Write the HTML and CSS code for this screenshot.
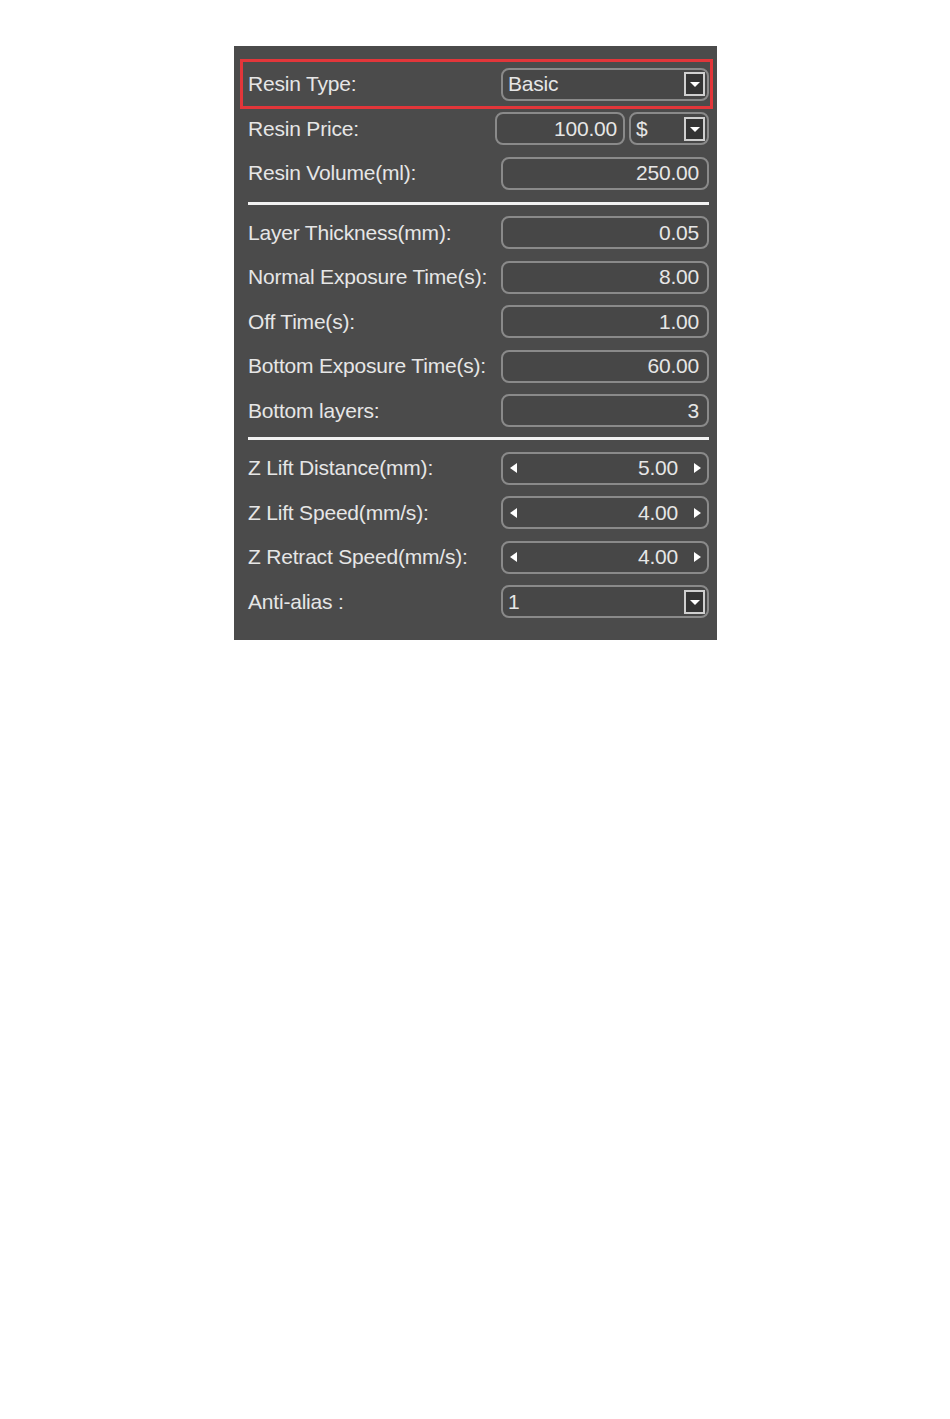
FILE: index.html
```html
<!DOCTYPE html>
<html lang="en">
<head>
    <meta charset="UTF-8">
    <meta name="viewport" content="width=device-width, initial-scale=1.0">
    <title>Print Settings</title>
    <link rel="stylesheet" href="styles.css">
</head>

<body>

    <div class="panel">
        <div class="row highlight">
            <span class="label">Resin Type:</span>
            <div class="field select">
                <span class="text">Basic</span>
                <span class="drop"></span>
            </div>
        </div>
        <div class="row">
            <span class="label">Resin Price:</span>
            <div class="pair">
                <div class="field price"><span class="text num">100.00</span></div>
                <div class="field select currency">
                    <span class="text">$</span>
                    <span class="drop"></span>
                </div>
            </div>
        </div>
        <div class="row">
            <span class="label">Resin Volume(ml):</span>
            <div class="field"><span class="text num">250.00</span></div>
        </div>

        <div class="sep"></div>

        <div class="row">
            <span class="label">Layer Thickness(mm):</span>
            <div class="field"><span class="text num">0.05</span></div>
        </div>
        <div class="row">
            <span class="label">Normal Exposure Time(s):</span>
            <div class="field"><span class="text num">8.00</span></div>
        </div>
        <div class="row">
            <span class="label">Off Time(s):</span>
            <div class="field"><span class="text num">1.00</span></div>
        </div>
        <div class="row">
            <span class="label">Bottom Exposure Time(s):</span>
            <div class="field"><span class="text num">60.00</span></div>
        </div>
        <div class="row">
            <span class="label">Bottom layers:</span>
            <div class="field"><span class="text num">3</span></div>
        </div>

        <div class="sep sep2"></div>

        <div class="row">
            <span class="label">Z Lift Distance(mm):</span>
            <div class="field spin">
                <span class="arrow left"></span>
                <span class="text num">5.00</span>
                <span class="arrow right"></span>
            </div>
        </div>
        <div class="row">
            <span class="label">Z Lift Speed(mm/s):</span>
            <div class="field spin">
                <span class="arrow left"></span>
                <span class="text num">4.00</span>
                <span class="arrow right"></span>
            </div>
        </div>
        <div class="row">
            <span class="label">Z Retract Speed(mm/s):</span>
            <div class="field spin">
                <span class="arrow left"></span>
                <span class="text num">4.00</span>
                <span class="arrow right"></span>
            </div>
        </div>
        <div class="row">
            <span class="label">Anti-alias :</span>
            <div class="field select">
                <span class="text">1</span>
                <span class="drop"></span>
            </div>
        </div>
    </div>

</body>
</html>
```

FILE: styles.css
```css
/* Page */
body {
    margin: 0;
    padding: 0;
    background: #ffffff;
    font-family: "Liberation Sans", Arial, sans-serif;
}

/* Panneau des réglages */
.panel {
    width: 483px;
    height: 594px;
    margin: 46px 0 0 234px;
    padding: 16px 8px 0 14px;
    box-sizing: border-box;
    background-color: #4b4b4b;
    color: #e6e6e6;
}

.row {
    display: flex;
    align-items: center;
    justify-content: space-between;
    height: 44.5px;
    font-size: 21px;
    letter-spacing: -0.2px;
}

.highlight {
    position: relative;
}

    .highlight::after {
        content: "";
        position: absolute;
        top: -3px;
        bottom: -2px;
        left: -8px;
        right: -4px;
        border: 3px solid #e2363a;
    }

.label {
    white-space: nowrap;
}

/* Champs */
.field {
    display: flex;
    align-items: center;
    justify-content: flex-end;
    width: 208px;
    height: 33px;
    box-sizing: border-box;
    padding: 0 8px;
    border: 2px solid #8a8a8a;
    border-radius: 8px;
    background-color: #474747;
}

.text {
    white-space: nowrap;
}

.select {
    justify-content: space-between;
    padding: 0 2px 0 5px;
}

.drop {
    position: relative;
    width: 21px;
    height: 24px;
    box-sizing: border-box;
    border: 2px solid #cfcfcf;
    background-color: #343434;
}

    .drop::after {
        content: "";
        position: absolute;
        left: 3.5px;
        top: 8px;
        border-left: 5px solid transparent;
        border-right: 5px solid transparent;
        border-top: 5px solid #ffffff;
    }

.pair {
    display: flex;
    gap: 4px;
}

.price {
    width: 130px;
    padding-right: 6px;
}

.currency {
    width: 80px;
}

/* Champs avec flèches */
.spin {
    padding: 0 6px 0 7px;
}

    .spin .num {
        margin-left: auto;
        margin-right: 16px;
    }

.arrow {
    width: 0;
    height: 0;
    border-top: 5px solid transparent;
    border-bottom: 5px solid transparent;
}

    .arrow.left {
        border-right: 7px solid #ffffff;
    }

    .arrow.right {
        border-left: 7px solid #ffffff;
    }

/* Séparateurs */
.sep {
    height: 3px;
    margin: 6px 0 6px 0;
    background-color: #f2f2f2;
}

.sep2 {
    margin: 4px 0 6px 0;
}
```
